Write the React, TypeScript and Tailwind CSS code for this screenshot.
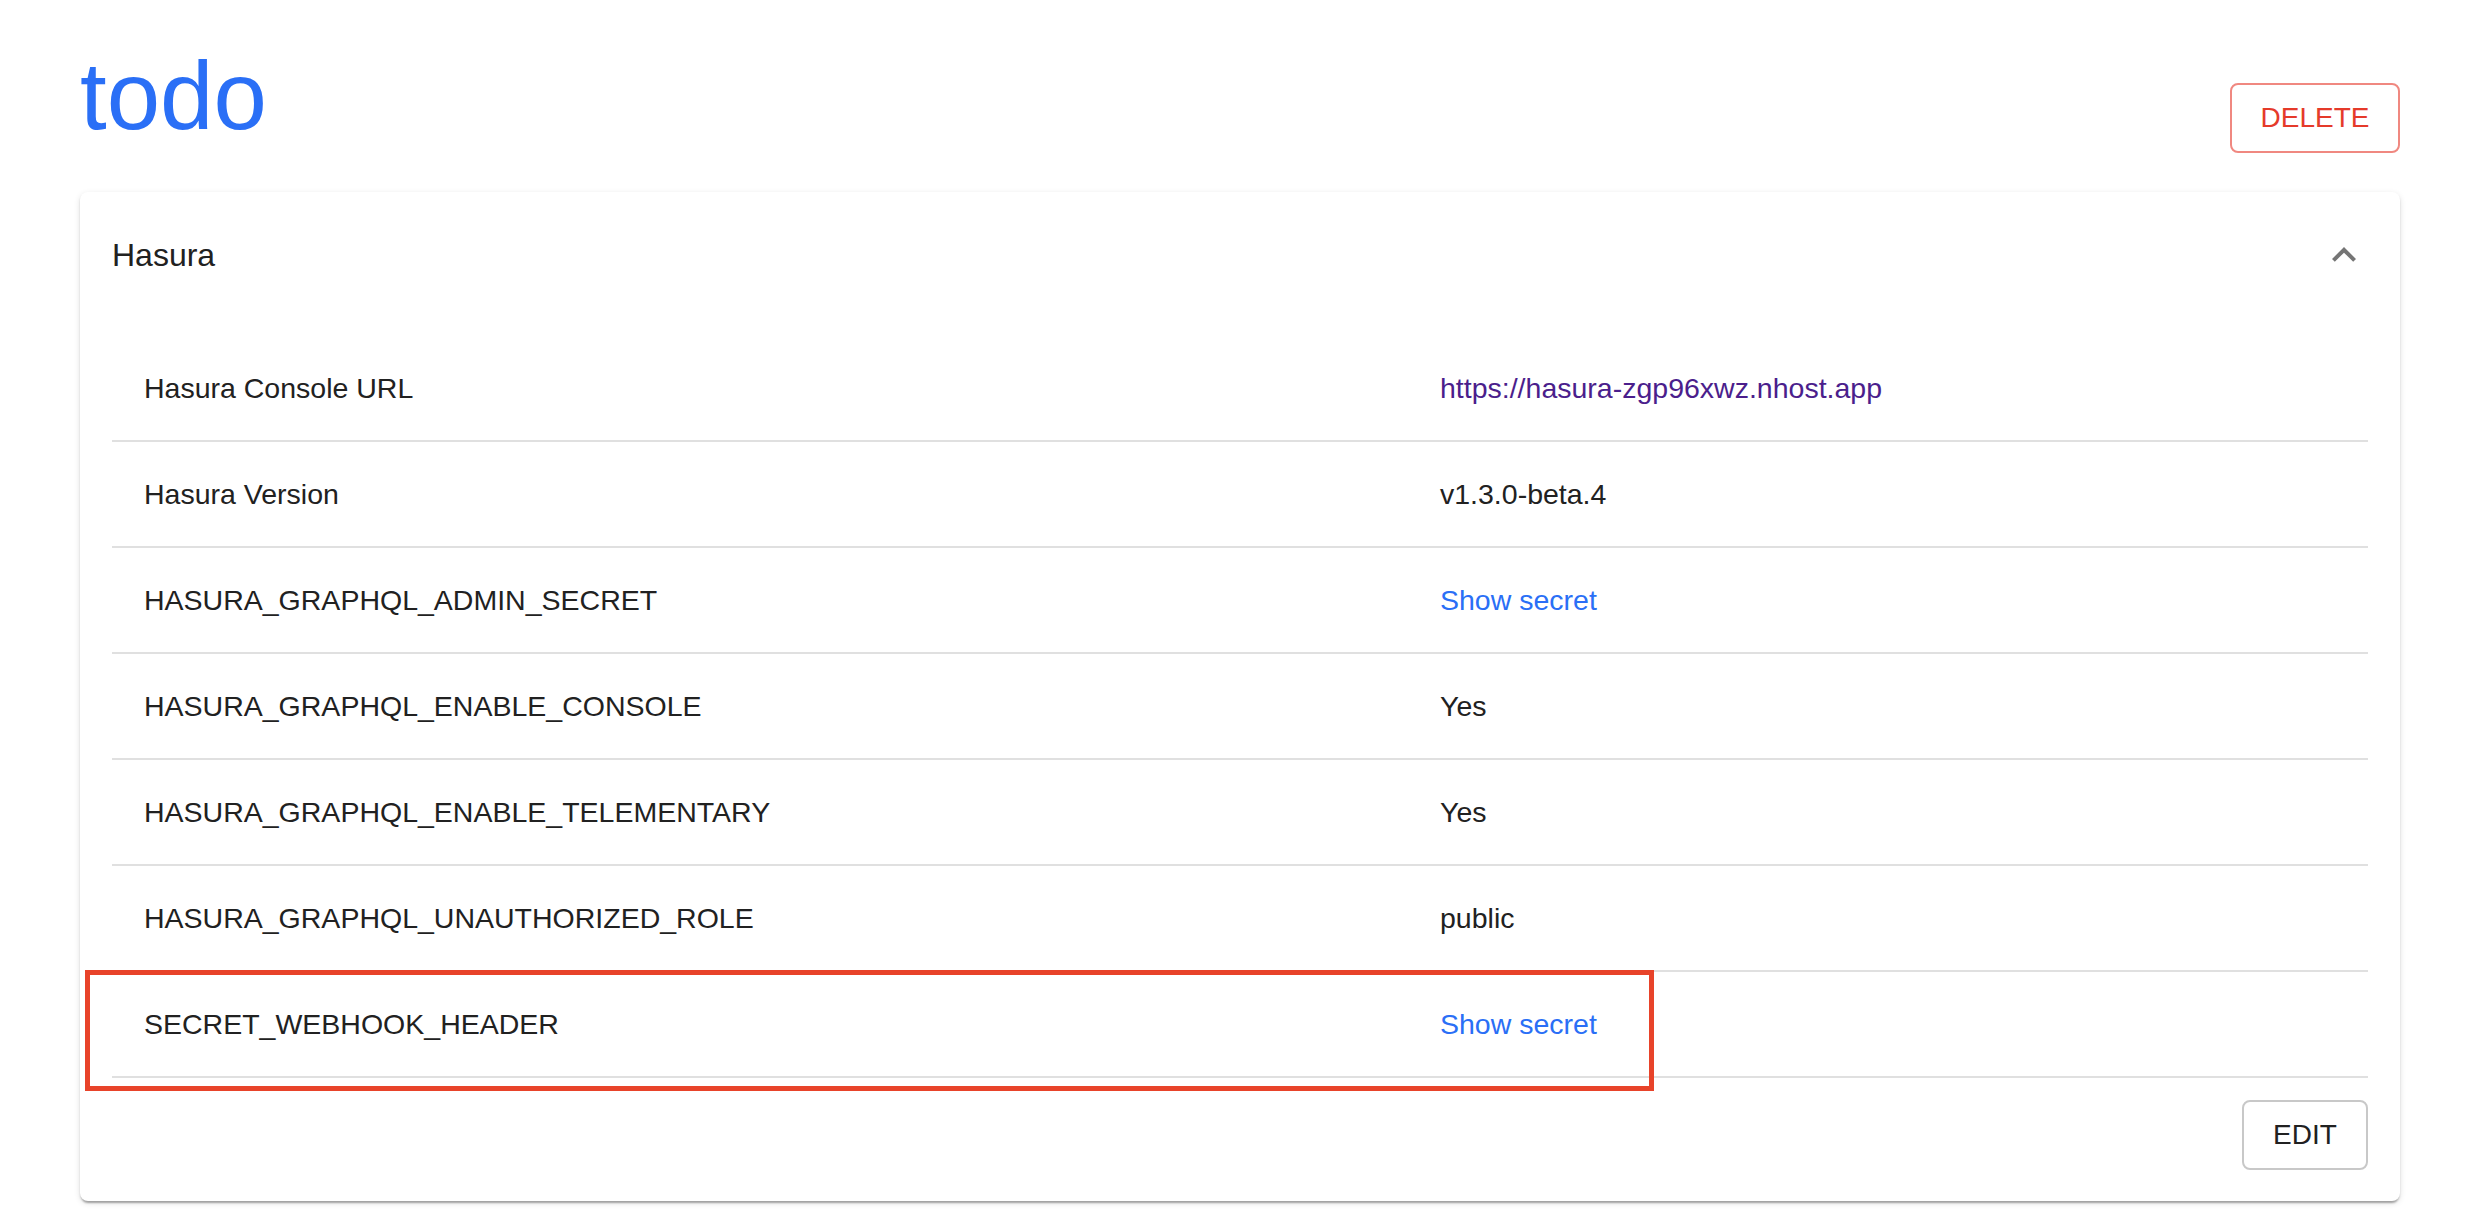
import React from "react";

const rows: { label: string; value: string; kind: "link" | "secret" | "text" }[] = [
  { label: "Hasura Console URL", value: "https://hasura-zgp96xwz.nhost.app", kind: "link" },
  { label: "Hasura Version", value: "v1.3.0-beta.4", kind: "text" },
  { label: "HASURA_GRAPHQL_ADMIN_SECRET", value: "Show secret", kind: "secret" },
  { label: "HASURA_GRAPHQL_ENABLE_CONSOLE", value: "Yes", kind: "text" },
  { label: "HASURA_GRAPHQL_ENABLE_TELEMENTARY", value: "Yes", kind: "text" },
  { label: "HASURA_GRAPHQL_UNAUTHORIZED_ROLE", value: "public", kind: "text" },
  { label: "SECRET_WEBHOOK_HEADER", value: "Show secret", kind: "secret" },
];

export default function App() {
  return (
    <div
      className="relative min-h-[1232px] w-full bg-white pl-[80px] pr-[70px] pt-[48px] text-[#212121]"
      style={{ fontFamily: '"Liberation Sans", Arial, Helvetica, sans-serif' }}
    >
      <div className="flex items-start justify-between">
        <h1 className="text-[96px] leading-[96px] font-normal text-[#2a6ff6]">todo</h1>
        <button className="mt-[35px] flex h-[70px] w-[170px] items-center justify-center rounded-[8px] border-2 border-[#f08880] bg-white text-[28px] leading-none text-[#e53a2a]">
          DELETE
        </button>
      </div>

      <div className="mt-[39px] rounded-[8px] bg-white shadow-[0_4px_2px_-2px_rgba(0,0,0,0.2),0_2px_2px_0_rgba(0,0,0,0.14),0_2px_6px_0_rgba(0,0,0,0.12)]">
        <div className="flex h-[126px] items-center justify-between px-[32px]">
          <span className="text-[32px] leading-none">Hasura</span>
          <svg width="48" height="48" viewBox="0 0 24 24" fill="#757575">
            <path d="M12 8l-6 6 1.41 1.41L12 10.83l4.59 4.58L18 14z" />
          </svg>
        </div>
        <div className="px-[32px] pt-[18px]">
          {rows.map((r) => (
            <div
              key={r.label}
              className="grid h-[106px] grid-cols-[1296px_1fr] items-center border-b-2 border-[#e0e0e0] text-[28.5px] leading-[40px]"
            >
              <div className="pl-[32px]">{r.label}</div>
              <div className="pl-[32px]">
                {r.kind === "link" ? (
                  <span className="text-[#4b1e8c]">{r.value}</span>
                ) : r.kind === "secret" ? (
                  <span className="text-[#2a6ff6]">{r.value}</span>
                ) : (
                  <span>{r.value}</span>
                )}
              </div>
            </div>
          ))}
          <div className="flex justify-end pb-[31px] pt-[22px]">
            <button className="flex h-[70px] w-[126px] items-center justify-center rounded-[8px] border-2 border-[#c8c8c8] bg-white text-[28px] leading-none text-[#212121]">
              EDIT
            </button>
          </div>
        </div>
      </div>

      <div className="pointer-events-none absolute left-[85px] top-[970px] h-[121px] w-[1569px] border-[5px] border-[#e8432a]" />
    </div>
  );
}
